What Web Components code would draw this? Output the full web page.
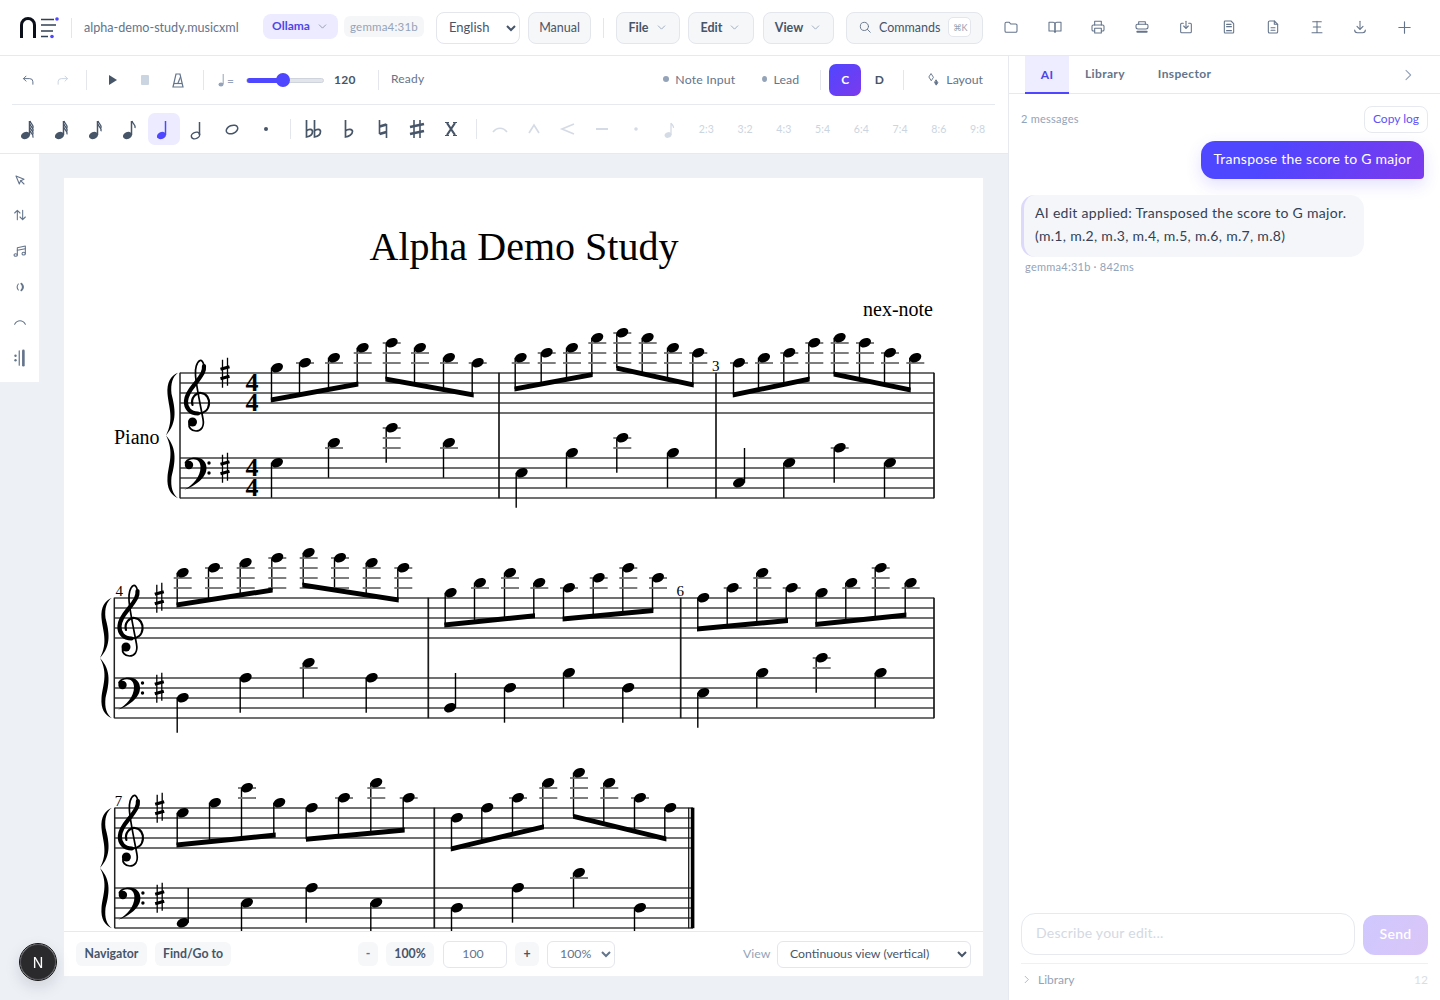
<!DOCTYPE html>
<html lang="en">
<head>
<meta charset="utf-8">
<title>nex-note</title>
<style>
  html, body { margin: 0; height: 100%; overflow: hidden; background: #fff; }
  body { font-family: Lato, "Open Sans", sans-serif; color: #334155; }
  #app { display: flex; flex-direction: column; height: 1000px; }
  #main { display: flex; flex: 1; min-height: 0; }
  #left { width: 1008px; display: flex; flex-direction: column; }
</style>
</head>
<body>
<div id="app">
  <app-header></app-header>
  <div id="main">
    <div id="left">
      <transport-bar></transport-bar>
      <note-palette></note-palette>
      <score-workspace></score-workspace>
    </div>
    <ai-panel></ai-panel>
  </div>
</div>
<dev-badge></dev-badge>

<script>
const FONT = `Lato, "Open Sans", sans-serif`

const ICONS = {
  chevron: `<path d="M6 9l6 6 6-6"/>`,
  right: `<path d="M9 5l7 7-7 7"/>`,
  search: `<circle cx="11" cy="11" r="7"/><path d="M16 16l5 5"/>`,
  folder: `<path d="M3 7a2 2 0 0 1 2-2h4.5l2 2.5H19a2 2 0 0 1 2 2V18a2 2 0 0 1-2 2H5a2 2 0 0 1-2-2z"/>`,
  book: `<path d="M3 5h6a3 3 0 0 1 3 3v12a2.5 2.5 0 0 0-2.5-2H3z"/><path d="M21 5h-6a3 3 0 0 0-3 3v12a2.5 2.5 0 0 1 2.5-2H21z"/>`,
  printer: `<path d="M7 9V3.5h10V9"/><path d="M7 18H5a2 2 0 0 1-2-2v-5a2 2 0 0 1 2-2h14a2 2 0 0 1 2 2v5a2 2 0 0 1-2 2h-2"/><path d="M7 14h10v7H7z"/>`,
  printer2: `<path d="M7 8V4h10v4"/><path d="M5 8h14a2 2 0 0 1 2 2v2a3 3 0 0 1-3 3H6a3 3 0 0 1-3-3v-2a2 2 0 0 1 2-2z"/><path d="M5 19h14" stroke-width="3"/>`,
  tray: `<path d="M8 6.5H5.5A1.5 1.5 0 0 0 4 8v11a1.5 1.5 0 0 0 1.5 1.5h13A1.5 1.5 0 0 0 20 19V8a1.5 1.5 0 0 0-1.5-1.5H16"/><path d="M12 3.5v10"/><path d="M8.5 10.5l3.5 3.5 3.5-3.5"/>`,
  save: `<path d="M6 3h9l4 4v13a1 1 0 0 1-1 1H6a1 1 0 0 1-1-1V4a1 1 0 0 1 1-1z"/><path d="M8.5 8h6.5M8.5 11.5h7M8.5 17.5h7" stroke-width="2"/>`,
  file: `<path d="M14 3H7a2 2 0 0 0-2 2v14a2 2 0 0 0 2 2h10a2 2 0 0 0 2-2V8z"/><path d="M14 3v5h5"/><path d="M9 13h6M9 17h6"/>`,
  spacing: `<path d="M12 3.5v17M5.5 4h13M6.5 12h11M4.5 20.5h15"/>`,
  download: `<path d="M12 3.5V15"/><path d="M7.5 11l4.5 4.5 4.5-4.5"/><path d="M4 16.5c0 2.5 1.5 4 4 4h8c2.5 0 4-1.5 4-4"/>`,
  plus: `<path d="M12 4v16M4 12h16"/>`,
  undo: `<path d="M8 5L4 9l4 4"/><path d="M4 9h10a5 5 0 0 1 5 5v4"/>`,
  redo: `<path d="M16 5l4 4-4 4"/><path d="M20 9H10a5 5 0 0 0-5 5v4"/>`,
  sparkle: `<path d="M10 3l3.5 5.5L10 14 6.5 8.5z"/><path d="M18 13l2.5 4-2.5 4-2.5-4z" fill="currentColor"/>`,
  pointer: `<path d="M6 6l12 5-5 2-2 5z"/><path d="M13 13l5 5"/>`,
  updown: `<path d="M8 19V5M4 9l4-4 4 4"/><path d="M16 5v14M12 15l4 4 4-4"/>`,
  music: `<path d="M8 18V7l12-2.5V16"/><path d="M8 11l12-2.5"/><ellipse cx="5.5" cy="18" rx="2.5" ry="2"/><ellipse cx="17.5" cy="16" rx="2.5" ry="2"/>`,
  parens: `<path d="M9.5 7.5C7.5 10 7.5 14 9.5 16.5"/><path d="M14 7c3 3 3 7 0 10" stroke-width="2.8"/>`,
  slur: `<path d="M4 15.5C8 8.5 16 8.5 20 15.5"/>`,
  repeat: `<circle cx="6" cy="9" r="1.6" fill="currentColor" stroke="none"/><circle cx="6" cy="15" r="1.6" fill="currentColor" stroke="none"/><path d="M11 2.5v19"/><path d="M16.5 2.5v19" stroke-width="3.5"/>`
}

function icon(name, size, sw) {
  return `<svg width="${size || 16}" height="${size || 16}" viewBox="0 0 24 24" fill="none" stroke="currentColor"
    stroke-width="${sw || 1.6}" stroke-linecap="round" stroke-linejoin="round" style="display:block;flex:none">${ICONS[name]}</svg>`
}

// note values for the palette: flags = number of tails
function noteIcon(flags) {
  let tails = ""
  for (let i = 0; i < flags; i++) {
    let y = 4 + i * 3.2
    tails += `<path d="M14 ${y}c.6 3 4 3.5 3 7" fill="none" stroke="currentColor" stroke-width="1.3"/>`
  }
  return `<svg width="24" height="24" viewBox="0 0 24 24" style="display:block">
    <ellipse cx="9.5" cy="18.5" rx="4.7" ry="3.5" transform="rotate(-22 9.5 18.5)" fill="currentColor"/>
    <path d="M13.5 18V4" stroke="currentColor" stroke-width="1.5"/>${tails}</svg>`
}

const GLYPHS = {
  half: `<ellipse cx="9.5" cy="18.5" rx="4.3" ry="3.1" transform="rotate(-22 9.5 18.5)" fill="none" stroke="currentColor" stroke-width="1.5"/><path d="M13.5 18V5" stroke="currentColor" stroke-width="1.5"/>`,
  whole: `<ellipse cx="12" cy="12.5" rx="6" ry="4" transform="rotate(-22 12 12.5)" fill="none" stroke="currentColor" stroke-width="1.5"/>`,
  dot: `<circle cx="12" cy="12" r="2" fill="currentColor"/>`,
  dflat: `<path d="M3.5 3v17c3-.5 6-2.5 6-5.5 0-2.5-3.5-3-6-.5M11.5 3v17c3-.5 6-2.5 6-5.5 0-2.5-3.5-3-6-.5" fill="none" stroke="currentColor" stroke-width="1.7"/>`,
  flat: `<path d="M8.5 3v17c3-.5 7-2.5 7-5.5 0-2.5-4.5-3-7-.5" fill="none" stroke="currentColor" stroke-width="1.7"/>`,
  natural: `<path d="M8.5 3v14M15.5 7v14" stroke="currentColor" stroke-width="1.6"/><path d="M8.5 9.5l7-2M8.5 17l7-2" stroke="currentColor" stroke-width="2.8"/>`,
  sharp: `<path d="M9 3v18M15 3v18" stroke="currentColor" stroke-width="1.6"/><path d="M5 10l14-3M5 17l14-3" stroke="currentColor" stroke-width="2.8"/>`,
  cross: `<path d="M8 6l8 12M16 6L8 18" stroke="currentColor" stroke-width="2.2"/><path d="M6 5.5h4M14 5.5h4M6 18.5h4M14 18.5h4" stroke="currentColor" stroke-width="1.1"/>`,
  tie: `<path d="M5 15C9 10 15 10 19 15" fill="none" stroke="currentColor" stroke-width="1.7"/>`,
  accent: `<path d="M7 16l5-8 5 8" fill="none" stroke="currentColor" stroke-width="1.7"/>`,
  cresc: `<path d="M18 7L6 12l12 5" fill="none" stroke="currentColor" stroke-width="1.7"/>`,
  dash: `<path d="M6 12h12" stroke="currentColor" stroke-width="2"/>`,
  staccato: `<circle cx="12" cy="12" r="1.8" fill="currentColor"/>`,
  grace: `<ellipse cx="10" cy="18" rx="3.5" ry="2.8" transform="rotate(-22 10 18)" fill="currentColor"/><path d="M13 18V6M13 6c1 2 3 2.5 2.5 5" fill="none" stroke="currentColor" stroke-width="1.3"/>`
}
function glyph(name) {
  return `<svg width="24" height="24" viewBox="0 0 24 24" style="display:block">${GLYPHS[name]}</svg>`
}

class AppHeader extends HTMLElement {
  constructor() {
    super()
    this.shadowDOM = this.attachShadow({mode: "open"})
  }

  connectedCallback() {
    this.render()
  }

  render() {
    const tools = ["folder", "book", "printer", "printer2", "tray", "save", "file", "spacing", "download", "plus"]
    this.shadowDOM.innerHTML = `
    <style>
      :host {
        display: flex;
        align-items: center;
        height: 55px;
        flex: none;
        border-bottom: 1px solid #e6e9ef;
        padding-left: 20px;
        font-family: ${FONT};
        box-sizing: content-box;
        background: #fff;
      }
      .logo { display: block; flex: none; }
      .sep { width: 1px; height: 20px; background: #e3e6ec; flex: none; }
      .name { width: 155px; margin-left: 12px; font-size: 12.6px; color: #64748b; white-space: nowrap; flex: none; }
      .pill { display: flex; align-items: center; justify-content: center; gap: 6px; flex: none; box-sizing: border-box; padding-bottom: 1px; }
      .ollama { width: 75px; height: 25px; margin-left: 24px; margin-top: -3px; border-radius: 8px; background: #ecebff; color: #4f46e5; font-size: 12px; font-weight: 700; padding-bottom: 2px; }
      .ollama svg { color: #8a94a8; margin-top: 2px; }
      .gemma { width: 80px; height: 21px; margin-left: 6px; margin-top: -2px; border-radius: 6px; background: #f5f6f8; color: #94a3b8; font-size: 11.5px; letter-spacing: .2px; padding-bottom: 0; }
      select {
        font: 13px ${FONT};
        color: #475569;
        width: 84px;
        height: 32px;
        margin-left: 12px;
        padding: 0 0 1px 8px;
        background: #fff;
        border: 1px solid #e3e6ec;
        border-radius: 8px;
        flex: none;
      }
      .btn {
        height: 32px;
        border: 1px solid #e3e6ec;
        border-radius: 8px;
        background: #f6f7f9;
        color: #475569;
        font-size: 12.5px;
      }
      .btn.bold { font-weight: 700; }
      .btn svg { color: #94a3b8; }
      .cmd { justify-content: flex-start; padding-left: 11px; gap: 7px; width: 137px; margin-left: 12px; }
      .cmd svg { color: #64748b; }
      kbd { font: 9px ${FONT}; color: #94a3b8; background: #fff; border: 1px solid #e3e6ec; border-radius: 5px; width: 21px; height: 18px; display: flex; align-items: center; justify-content: center; margin-left: 1px; }
      .tools { display: flex; margin-left: 6px; color: #64748b; }
      .tools span { width: 43.7px; display: flex; justify-content: center; }
    </style>
    <svg class="logo" width="39" height="24" viewBox="0 0 39 24" fill="none">
      <path d="M1.5 22V9a6.5 6.5 0 0 1 13 0v13" stroke="#0b0f19" stroke-width="3"/>
      <path d="M21 3.5h13M21 9h15M21 15h12M21 20.5h7" stroke="#334155" stroke-width="1.5"/>
      <circle cx="37" cy="3" r="1.8" fill="#4f46ff"/><circle cx="32" cy="20.5" r="1.8" fill="#4f46ff"/>
    </svg>
    <span class="sep" style="margin-left:12px"></span>
    <span class="name">alpha-demo-study.musicxml</span>
    <span class="pill ollama">Ollama ${icon("chevron", 13)}</span>
    <span class="pill gemma">gemma4:31b</span>
    <select><option>English</option></select>
    <span class="pill btn" style="width:63px;margin-left:8px">Manual</span>
    <span class="sep" style="margin-left:12px"></span>
    <span class="pill btn bold" style="width:64px;margin-left:12px">File ${icon("chevron", 13)}</span>
    <span class="pill btn bold" style="width:66px;margin-left:8px">Edit ${icon("chevron", 13)}</span>
    <span class="pill btn bold" style="width:71px;margin-left:9px">View ${icon("chevron", 13)}</span>
    <span class="pill btn cmd">${icon("search", 14)} Commands <kbd>⌘K</kbd></span>
    <div class="tools">${tools.map(t => `<span>${icon(t, t == "plus" ? 17 : 16)}</span>`).join("")}</div>
    `
  }
}

class TransportBar extends HTMLElement {
  constructor() {
    super()
    this.shadowDOM = this.attachShadow({mode: "open"})
  }

  connectedCallback() {
    this.shadowDOM.innerHTML = `
    <style>
      :host {
        display: flex;
        align-items: center;
        flex: none;
        height: 48px;
        margin: 0 13px 0 12px;
        border-bottom: 1px solid #e6e9ef;
        font-family: ${FONT};
        font-size: 12.3px;
        color: #64748b;
      }
      .b { width: 32px; height: 32px; display: flex; align-items: center; justify-content: center; flex: none; }
      .sep { width: 1px; height: 20px; background: #e3e6ec; flex: none; }
      .tempo { display: flex; align-items: center; width: 22px; margin-left: 14px; color: #94a3b8; font-size: 12px; }
      .track { position: relative; width: 78px; height: 5px; margin-left: 6px; border-radius: 3px; background: #e2e5ea; border: 1px solid #cfd4dc; box-sizing: border-box; }
      .track i { display: block; width: 36px; height: 5px; margin-top: -1px; background: #4f46ff; border-radius: 3px; }
      .track b { position: absolute; left: 29px; top: -5.5px; width: 14px; height: 14px; border-radius: 50%; background: #4f46ff; }
      .num { margin-left: 10px; width: 24px; font-size: 12px; font-weight: 700; letter-spacing: .3px; color: #475569; padding-bottom: 2px; }
      .mode { display: flex; align-items: center; gap: 6px; color: #64748b; letter-spacing: .15px; padding-bottom: 2px; }
      .mode::before { content: ""; width: 6px; height: 6px; border-radius: 50%; background: #94a3b8; }
      .key { width: 32px; height: 32px; display: flex; align-items: center; justify-content: center; border-radius: 7px; font-size: 12px; font-weight: 700; color: #475569; padding-bottom: 1px; box-sizing: border-box; }
      .key.on { color: #fff; background: linear-gradient(135deg, #4f46ff, #7c3aed); }
    </style>
    <span class="b" style="color:#64748b">${icon("undo", 15)}</span>
    <span class="b" style="margin-left:2px;color:#cbd5e1">${icon("redo", 15)}</span>
    <span class="sep" style="margin-left:8px"></span>
    <span class="b" style="margin-left:10px;color:#475569"><svg width="10" height="12" viewBox="0 0 10 12"><path d="M1 1l8 5-8 5z" fill="currentColor"/></svg></span>
    <span class="b" style="color:#cbd5e1"><svg width="8" height="10"><rect width="8" height="10" rx="1" fill="currentColor"/></svg></span>
    <span class="b" style="margin-left:1px;color:#64748b"><svg width="12" height="15" viewBox="0 0 12 15" fill="none" stroke="currentColor" stroke-width="1.2"><path d="M4 1h4l3 13H1z"/><path d="M2 10.5h8"/><path d="M6 10L8.5 4"/></svg></span>
    <span class="sep" style="margin-left:9px"></span>
    <span class="tempo">
      <svg width="8" height="14" viewBox="0 0 8 14"><ellipse cx="3" cy="11.5" rx="2.5" ry="1.9" fill="currentColor"/><path d="M5.2 11V1" stroke="currentColor" stroke-width="1"/></svg>
      <span style="margin-left:1px">=</span>
    </span>
    <span class="track"><i></i><b></b></span>
    <span class="num">120</span>
    <span class="sep" style="margin-left:20px"></span>
    <span style="margin-left:12px;font-size:12px;letter-spacing:.2px;padding-bottom:3px">Ready</span>
    <span class="mode" style="margin-left:239px;width:72px">Note&nbsp;Input</span>
    <span class="mode" style="margin-left:27px;width:37px">Lead</span>
    <span class="sep" style="margin-left:21px"></span>
    <span class="key on" style="margin-left:8px">C</span>
    <span class="key" style="margin-left:2px">D</span>
    <span class="sep" style="margin-left:8px"></span>
    <span style="margin-left:21px;display:flex;align-items:center;gap:6px;color:#64748b;padding-bottom:2px">${icon("sparkle", 15, 1.5)}Layout</span>
    `
  }
}

class NotePalette extends HTMLElement {
  constructor() {
    super()
    this.shadowDOM = this.attachShadow({mode: "open"})
  }

  connectedCallback() {
    const values = [noteIcon(4), noteIcon(3), noteIcon(2), noteIcon(1), noteIcon(0), glyph("half"), glyph("whole"), glyph("dot")]
    const accid = ["dflat", "flat", "natural", "sharp", "cross"]
    const marks = ["tie", "accent", "cresc", "dash", "staccato", "grace"]
    const tuplets = ["2:3", "3:2", "4:3", "5:4", "6:4", "7:4", "8:6", "9:8"]
    this.shadowDOM.innerHTML = `
    <style>
      :host {
        display: flex;
        align-items: center;
        flex: none;
        height: 48px;
        padding-left: 12px;
        border-bottom: 1px solid #e6e9ef;
        box-sizing: content-box;
        font-family: ${FONT};
        color: #475569;
      }
      .b { width: 32px; height: 32px; margin-right: 2px; display: flex; align-items: center; justify-content: center; border-radius: 7px; flex: none; }
      .on { background: #ecebff; color: #4f46ff; }
      .off { color: #d5dbe5; }
      .sep { width: 1px; height: 20px; background: #e3e6ec; flex: none; }
      .t { width: 38.75px; flex: none; text-align: center; font-size: 10.5px; letter-spacing: .2px; color: #cbd5e1; }
    </style>
    ${values.map((v, i) => `<span class="b ${i == 4 ? "on" : ""}">${v}</span>`).join("")}
    <span class="sep" style="margin-left:6px"></span>
    <span style="width:8px;flex:none"></span>
    ${accid.map(a => `<span class="b">${glyph(a)}</span>`).join("")}
    <span class="sep" style="margin-left:7px"></span>
    <span style="width:7px;flex:none"></span>
    ${marks.map(a => `<span class="b off">${glyph(a)}</span>`).join("")}
    <span style="width:0;margin-left:-1px;flex:none"></span>
    ${tuplets.map(t => `<span class="t">${t}</span>`).join("")}
    `
  }
}

class ToolRail extends HTMLElement {
  constructor() {
    super()
    this.shadowDOM = this.attachShadow({mode: "open"})
  }

  connectedCallback() {
    const tools = ["pointer", "updown", "music", "parens", "slur", "repeat"]
    this.shadowDOM.innerHTML = `
    <style>
      :host {
        display: flex;
        flex-direction: column;
        align-items: center;
        flex: none;
        align-self: flex-start;
        box-sizing: border-box;
        width: 39px;
        height: 228px;
        padding-top: 8px;
        background: #fff;
        color: #64748b;
      }
      span { height: 35.6px; display: flex; align-items: center; justify-content: center; }
    </style>
    ${tools.map(t => `<span>${icon(t, t == "repeat" ? 18 : 16)}</span>`).join("")}
    `
  }
}

// --- score data, all coordinates in page pixels ---
const SYSTEMS = [
  {
    left: 180, right: 934, T: 372.7, B: 457.7, brace: 166, time: true,
    bars: [499, 716, 934],
    treble: [
      [277,367.7],[305,362.7],[334,357.7],[362.7,347.7],[391.7,342.7],[420,347.7],[449,357.7],[477.7,362.7],
      [520.7,357.7],[546.7,352.7],[572,347.7],[597.3,337.7],[622.3,332.7],[647.7,337.7],[673,347.7],[698.3,352.7],
      [739,362.7],[764,357.7],[789.3,352.7],[814.3,342.7],[839.7,337.7],[865,342.7],[890,352.7],[915.3,357.7]
    ],
    beams: [
      [271.5,400,357.7,384],[386,379,473,395],
      [515.2,389,592,374.5],[617,368,693,385],
      [733.5,395,809,379],[834.2,374,910,390]
    ],
    bass: [
      [277,462.7,497.7],[334,442.7,477.7],[391.7,427.7,462.7],[449,442.7,477.7],
      [521.7,472.7,507.7],[572,452.7,487.7],[622.3,437.7,472.7],[673,452.7,487.7],
      [739,482.7,448],[789.3,462.7,497.7],[839.7,447.7,482.7],[890,462.7,497.7]
    ],
    numbers: [[715.7,371,"3"]]
  },
  {
    left: 114.3, right: 934, T: 597.7, B: 677.7, brace: 100,
    bars: [428.3, 680.7, 934],
    treble: [
      [182.7,572.7],[214,567.7],[245.7,562.7],[277.3,557.7],[308.7,552.7],[340,557.7],[371.7,562.7],[403.3,567.7],
      [450.7,592.7],[480,582.7],[510,572.7],[539.3,582.7],[569,587.7],[598.7,577.7],[628.3,567.7],[658,577.7],
      [703.3,597.7],[732.7,587.7],[762.3,572.7],[791.7,587.7],[821.7,592.7],[851.3,582.7],[880.7,567.7],[910.7,582.7]
    ],
    beams: [
      [177.2,605,272,590],[303,585,398,600],
      [445,625,534.3,615.7],[563.3,619,652.7,610.5],
      [697.7,629,787.3,620.5],[816,624.5,905.7,615]
    ],
    bass: [
      [182.7,697.7,732.7],[245.7,677.7,712.7],[308.7,662.7,697.7],[371.7,677.7,712.7],
      [450,707.7,673],[510,687.7,722.7],[569,672.7,707.7],[628.3,687.7,722.7],
      [703.3,692.7,727.7],[762.3,672.7,707.7],[821.7,657.7,692.7],[880.7,672.7,707.7]
    ],
    numbers: [[119.3,595.5,"4"],[680.3,595.5,"6"]]
  },
  {
    left: 114.7, right: 693, T: 807.7, B: 887.7, brace: 100,
    bars: [434.3],
    final: [688.7, 692.6],
    treble: [
      [182.7,812.7],[215,802.7],[247,787.7],[279.3,802.7],[311.7,807.7],[344,797.7],[376.3,782.7],[408.7,797.7],
      [457,817.7],[487.3,807.7],[518,797.7],[548.3,782.7],[579,772.7],[609.3,782.7],[640,797.7],[670.3,807.7]
    ],
    beams: [
      [177.2,845,275,835],[306.7,839.3,404,830],
      [451.5,849,543.3,826.7],[573.7,816.3,665.7,839]
    ],
    bass: [
      [182.7,922.7,888],[247,902.7,940],[311.7,887.7,922.7],[376.3,902.7,940],
      [457,907.7,945],[518,887.7,922.7],[579,872.7,907.7],[640,907.7,945]
    ],
    numbers: [[118.5,806,"7"]]
  }
]

const TREBLE_CLEF = `
  <g fill="none" stroke="#000" stroke-linecap="round">
    <path stroke-width="2.2" d="M192.5 405C190.5 398 196 392.5 201 393C207 393.5 209.5 399 209 404C208.5 410 204 413.5 198 413.5"/>
    <path stroke-width="4.2" d="M198 413.5C190 413.5 185.5 408 186 401C186.5 392 194 386 198 380C202 374.5 204.5 371 204 366"/>
    <path stroke-width="1.7" d="M204 366C203.5 362 201.5 360 200 360.5C196.5 362 195 369 195.5 375C196 385 201 408 203 419C204.5 427 201 431 196 431C191 431 188.5 427 189 424"/>
  </g>
  <circle cx="192.5" cy="422" r="4.5" fill="#000"/>`

const BASS_CLEF = `
  <path fill="#000" d="M184.5 463.5C185 459.5 190 457.5 195 457.5C203 457.5 206.5 462.5 206.5 468C206.5 478 195 486 184.5 489.8C193 484.5 200.5 477 200.5 467C200.5 462 197.5 459.3 193.5 459.3C190 459.3 187.5 461 187 463Z"/>
  <circle cx="189" cy="465" r="4.2" fill="#000"/>
  <circle cx="209" cy="463" r="1.7" fill="#000"/><circle cx="209" cy="473" r="1.7" fill="#000"/>`

function sharp(x, y) {
  return `<path d="M${x - 2.5} ${y - 13}v28M${x + 2.5} ${y - 15}v28" stroke="#000" stroke-width="1.3"/>
    <path d="M${x - 4.5} ${y - 3.5}l9-2.5M${x - 4.5} ${y + 6}l9-2.5" stroke="#000" stroke-width="3.2"/>`
}

function brace(x, top, h) {
  const s = h / 125
  const half = `M12 0C4.5 3 .7 10 1.5 21C2.5 34 8.5 46 0 62.5C12 49 9 35 5.5 21C4.5 11 6.5 4 12 0Z`
  return `<g transform="translate(${x} ${top}) scale(1 ${s})" fill="#000">
    <path d="${half}"/>
    <path d="${half}" transform="translate(0 125) scale(1 -1)"/>
  </g>`
}

function staffLine(x1, x2, y) {
  return `<line x1="${x1}" x2="${x2}" y1="${y + .3}" y2="${y + .3}" stroke="#707070" stroke-width="1.8"/>`
}

function noteHead(x, y, top) {
  let out = ""
  for (let l = top - 10; l >= y - 0.5; l -= 10) {
    out += staffLine(x - 9, x + 9, l)
  }
  return out + `<ellipse cx="${x}" cy="${y}" rx="6.3" ry="4.4" transform="rotate(-25 ${x} ${y})" fill="#000"/>`
}

function scoreMarkup() {
  let out = ""
  for (const s of SYSTEMS) {
    for (const top of [s.T, s.B]) {
      for (let i = 0; i < 5; i++) {
        out += staffLine(s.left, s.right, top + i * 10)
      }
    }
    const bottom = s.B + 40.5
    out += `<line x1="${s.left}" x2="${s.left}" y1="${s.T}" y2="${bottom}" stroke="#222" stroke-width="1.5"/>`
    out += brace(s.brace, s.T, bottom - s.T)
    for (const b of s.bars) {
      out += `<line x1="${b}" x2="${b}" y1="${s.T}" y2="${bottom}" stroke="#1a1a1a" stroke-width="1.7"/>`
    }
    if (s.final) {
      out += `<line x1="${s.final[0]}" x2="${s.final[0]}" y1="${s.T}" y2="${bottom}" stroke="#1a1a1a" stroke-width="1.3"/>`
      out += `<line x1="${s.final[1]}" x2="${s.final[1]}" y1="${s.T}" y2="${bottom}" stroke="#000" stroke-width="3.6"/>`
    }

    // clefs and key signature
    const dx = s.left == 180 ? 0 : s.left - 180 - 0.8
    out += `<g transform="translate(${dx} ${s.T - 372.7})">${TREBLE_CLEF}</g>`
    out += `<g transform="translate(${dx} ${s.B - 457.7})">${BASS_CLEF}</g>`
    out += sharp(s.left + 45, s.T)
    out += sharp(s.left + 45, s.B + 10)
    if (s.time) {
      for (const y of [391, 476]) {
        out += `<text text-anchor="middle" font-family="Liberation Serif" font-weight="700" font-size="26"><tspan x="252" y="${y}">4</tspan><tspan x="252" y="${y + 20}">4</tspan></text>`
      }
    }

    // treble notes, stems go down to the beam
    s.treble.forEach(([x, y], i) => {
      const sx = x - 5.5
      const beam = s.beams[Math.floor(i / 4)]
      const end = beam[1] + (beam[3] - beam[1]) * (sx - beam[0]) / (beam[2] - beam[0])
      out += `<line x1="${sx}" x2="${sx}" y1="${y}" y2="${end}" stroke="#000" stroke-width="1.4"/>`
      out += noteHead(x, y, s.T)
    })
    for (const b of s.beams) {
      out += `<polygon points="${b[0] - .7},${b[1] - 2.5} ${b[2] + .7},${b[3] - 2.5} ${b[2] + .7},${b[3] + 2.5} ${b[0] - .7},${b[1] + 2.5}" fill="#000"/>`
    }

    // bass notes carry their stem end
    for (const [x, y, end] of s.bass) {
      const sx = end < y ? x + 5.5 : x - 5.5
      out += `<line x1="${sx}" x2="${sx}" y1="${y}" y2="${end}" stroke="#000" stroke-width="1.4"/>`
      out += noteHead(x, y, s.B)
    }

    for (const [x, y, n] of s.numbers) {
      out += `<text x="${x}" y="${y}" text-anchor="middle" font-family="Liberation Serif" font-size="15">${n}</text>`
    }
  }
  return out
}

class ScoreSheet extends HTMLElement {
  constructor() {
    super()
    this.shadowDOM = this.attachShadow({mode: "open"})
  }

  connectedCallback() {
    this.shadowDOM.innerHTML = `
    <style>
      :host { display: block; flex: 1; min-height: 0; overflow: hidden; background: #fff; }
      svg { display: block; }
      text { fill: #000; }
    </style>
    <svg width="919" height="770" viewBox="64 178 919 770">
      <text x="524" y="260" text-anchor="middle" font-family="Liberation Serif" font-size="40">Alpha Demo Study</text>
      <text x="933" y="316" text-anchor="end" font-family="Liberation Serif" font-size="20">nex-note</text>
      <text x="114" y="444" font-family="Liberation Serif" font-size="20">Piano</text>
      ${scoreMarkup()}
    </svg>
    `
  }
}

class ScoreFooter extends HTMLElement {
  constructor() {
    super()
    this.shadowDOM = this.attachShadow({mode: "open"})
  }

  connectedCallback() {
    this.shadowDOM.innerHTML = `
    <style>
      :host {
        display: flex;
        align-items: center;
        flex: none;
        height: 44px;
        padding-left: 12px;
        border-top: 1px solid #e6e9ef;
        background: #fff;
        font-family: ${FONT};
        font-size: 12.3px;
        color: #475569;
      }
      .b { height: 24px; display: flex; align-items: center; justify-content: center; background: #f6f7f9; border-radius: 6px; font-weight: 700; flex: none; box-sizing: border-box; padding-bottom: 1px; }
      .field { height: 27px; box-sizing: border-box; border: 1px solid #e3e6ec; border-radius: 6px; background: #fff; flex: none; font: 12.3px ${FONT}; color: #64748b; }
      input.field { width: 64px; margin-left: 9px; text-align: center; padding: 0 4px 1px 0; }
      select.field { padding: 0 0 2px 8px; }
    </style>
    <span class="b" style="width:71px">Navigator</span>
    <span class="b" style="width:76px;margin-left:8px">Find/Go to</span>
    <span class="b" style="width:20px;margin-left:127px;color:#64748b">-</span>
    <span class="b" style="width:48px;margin-left:8px">100%</span>
    <input class="field" value="100">
    <span class="b" style="width:24px;margin-left:8px">+</span>
    <select class="field" style="width:68px;margin-left:8px"><option>100%</option></select>
    <span style="margin-left:128px;color:#94a3b8;width:34px;padding-bottom:1px">View</span>
    <select class="field" style="width:194px;color:#475569"><option>Continuous view (vertical)</option></select>
    `
  }
}

class ScoreWorkspace extends HTMLElement {
  constructor() {
    super()
    this.shadowDOM = this.attachShadow({mode: "open"})
  }

  connectedCallback() {
    this.shadowDOM.innerHTML = `
    <style>
      :host { display: flex; flex: 1; min-height: 0; background: #edf0f5; }
      .desk { flex: 1; min-width: 0; padding: 24px 25px; display: flex; flex-direction: column; box-sizing: border-box; }
    </style>
    <tool-rail></tool-rail>
    <div class="desk">
      <score-sheet></score-sheet>
      <score-footer></score-footer>
    </div>
    `
  }
}

class ChatBubble extends HTMLElement {
  constructor() {
    super()
    this.shadowDOM = this.attachShadow({mode: "open"})
  }

  connectedCallback() {
    const user = this.getAttribute("role") == "user"
    this.shadowDOM.innerHTML = `
    <style>
      :host { display: block; box-sizing: border-box; font-size: 14px; }
      .user {
        width: 223px; height: 38px; margin-left: auto; margin-right: 4px; padding-bottom: 3px;
        display: flex; align-items: center; justify-content: center; box-sizing: border-box;
        color: #fff; letter-spacing: .25px; white-space: nowrap;
        background: linear-gradient(120deg, #4f46ff 30%, #7c3aed);
        border-radius: 14px 14px 4px 14px;
        box-shadow: 0 6px 16px rgba(79, 70, 255, .16);
      }
      .bot {
        width: 343px; height: 62px; box-sizing: border-box;
        padding: 6px 0 0 11px;
        color: #334155; line-height: 23px; letter-spacing: .3px; white-space: nowrap;
        background: #f5f6f9;
        border-left: 3px solid #dcd9fb;
        border-radius: 14px;
      }
    </style>
    <div class="${user ? "user" : "bot"}"><slot></slot></div>
    `
  }
}

class AiPanel extends HTMLElement {
  constructor() {
    super()
    this.shadowDOM = this.attachShadow({mode: "open"})
  }

  connectedCallback() {
    this.shadowDOM.innerHTML = `
    <style>
      :host {
        display: flex;
        flex-direction: column;
        width: 432px;
        flex: none;
        box-sizing: border-box;
        border-left: 1px solid #e6e9ef;
        background: #fff;
        font-family: ${FONT};
        font-size: 12.5px;
        color: #64748b;
      }
      .tabs { display: flex; align-items: stretch; height: 37px; padding-left: 16px; border-bottom: 1px solid #e6e9ef; flex: none; }
      .tab { display: flex; align-items: center; justify-content: center; font-weight: 700; letter-spacing: .35px; font-size: 12px; padding-bottom: 2px; box-sizing: border-box; }
      .tab.on { width: 44px; color: #4f46e5; background: #eeecff; border-bottom: 2px solid #4f46ff; margin-bottom: -1px; padding-bottom: 0; }
      .chev { margin-left: auto; margin-right: 24px; align-self: center; color: #94a3b8; }
      .body { flex: 1; min-height: 0; display: flex; flex-direction: column; padding: 12px 12px 0; }
      .top { display: flex; align-items: center; justify-content: space-between; height: 27px; flex: none; }
      .count { font-size: 11px; letter-spacing: .25px; color: #94a3b8; padding-bottom: 3px; }
      .copy { width: 64px; height: 27px; display: flex; align-items: center; justify-content: center; box-sizing: border-box; border: 1px solid #e6e9ef; border-radius: 8px; color: #5b54f6; font-size: 12px; padding-bottom: 2px; }
      .meta { margin: 3px 0 0 4px; font-size: 11px; letter-spacing: .25px; color: #94a3b8; }
      .grow { flex: 1; }
      .compose { display: flex; align-items: flex-end; gap: 8px; flex: none; height: 42px; }
      .input { width: 334px; height: 42px; box-sizing: border-box; display: flex; align-items: center; padding: 0 0 3px 14px; border: 1px solid #e6e9ef; border-radius: 14px; color: #d3d9e3; font-size: 14px; letter-spacing: .25px; }
      .send { width: 65px; height: 40px; display: flex; align-items: center; justify-content: center; box-sizing: border-box; padding-bottom: 3px; border-radius: 12px; color: #fff; font-size: 14px; font-weight: 600; letter-spacing: .25px; background: linear-gradient(120deg, #cfc8ff, #dac5f7); }
      .lib { display: flex; align-items: center; height: 33px; margin-top: 8px; padding-bottom: 2px; box-sizing: border-box; border-top: 1px solid #eef0f4; color: #94a3b8; font-size: 12px; flex: none; }
      .lib svg { margin-right: 6px; }
      .lib .n { margin-left: auto; color: #d9dee7; }
    </style>
    <div class="tabs">
      <span class="tab on">AI</span>
      <span class="tab" style="margin-left:16px">Library</span>
      <span class="tab" style="margin-left:33px">Inspector</span>
      <span class="chev">${icon("right", 16)}</span>
    </div>
    <div class="body">
      <div class="top"><span class="count">2 messages</span><span class="copy">Copy log</span></div>
      <chat-bubble role="user" style="margin-top:8px">Transpose the score to G major</chat-bubble>
      <chat-bubble role="ai" style="margin-top:16px">AI edit applied: Transposed the score to G major.<br>(m.1, m.2, m.3, m.4, m.5, m.6, m.7, m.8)</chat-bubble>
      <div class="meta">gemma4:31b · 842ms</div>
      <div class="grow"></div>
      <div class="compose"><div class="input">Describe your edit...</div><div class="send">Send</div></div>
      <div class="lib">${icon("right", 11)}Library<span class="n">12</span></div>
      <div style="height:4px"></div>
    </div>
    `
  }
}

class DevBadge extends HTMLElement {
  constructor() {
    super()
    this.shadowDOM = this.attachShadow({mode: "open"})
  }

  connectedCallback() {
    this.shadowDOM.innerHTML = `
    <style>
      :host {
        position: fixed;
        left: 20px;
        top: 944px;
        width: 36px;
        height: 36px;
        box-sizing: border-box;
        display: flex;
        align-items: center;
        justify-content: center;
        border-radius: 50%;
        border: 1px solid #55555a;
        outline: 1px solid #111;
        background: #2a2a2d;
        color: #fff;
        font: 14px Inter, sans-serif;
        box-shadow: 0 6px 16px rgba(15, 23, 42, .15);
      }
    </style>
    N
    `
  }
}

customElements.define("app-header", AppHeader)
customElements.define("transport-bar", TransportBar)
customElements.define("note-palette", NotePalette)
customElements.define("tool-rail", ToolRail)
customElements.define("score-sheet", ScoreSheet)
customElements.define("score-footer", ScoreFooter)
customElements.define("score-workspace", ScoreWorkspace)
customElements.define("chat-bubble", ChatBubble)
customElements.define("ai-panel", AiPanel)
customElements.define("dev-badge", DevBadge)
</script>
</body>
</html>
